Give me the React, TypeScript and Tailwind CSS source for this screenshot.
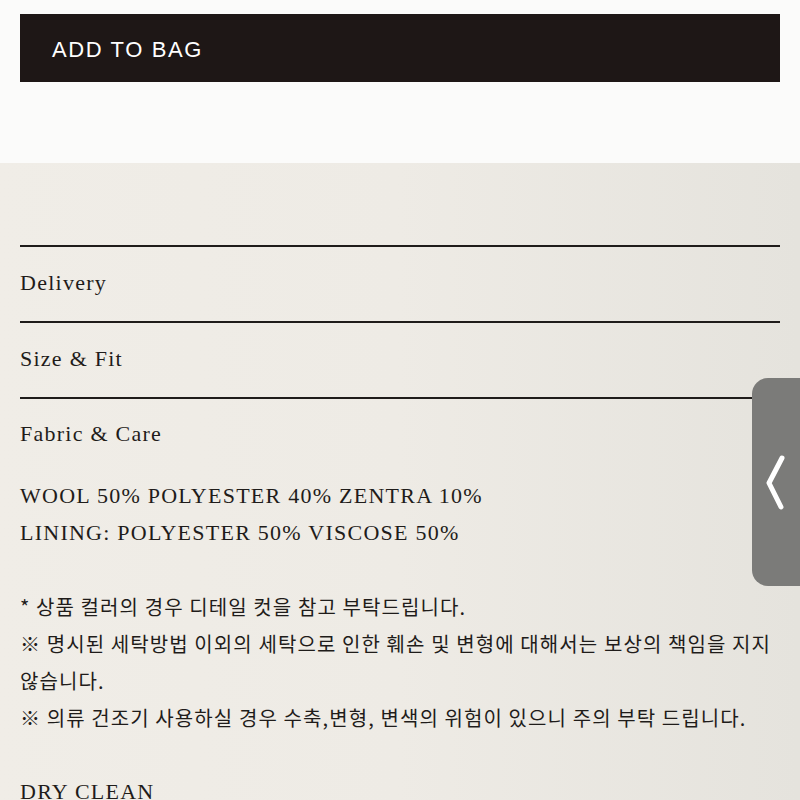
export default function App() {
  const serif = "font-['Liberation_Serif',serif] text-[22px] tracking-[1.25px]";
  const kr = "font-['Noto_Sans_CJK_KR','Noto_Sans',sans-serif] text-[20px] tracking-[1.1px] break-keep";
  return (
    <div className="relative w-[800px] h-[800px] overflow-hidden text-[#1f1c1a]">
      {/* top */}
      <div className="bg-[#fbfbfa] h-[163px] px-5 pt-[14px]">
        <button className="w-full h-[68px] bg-[#1e1716] text-left pl-8 pt-[2px] text-white font-['Liberation_Sans',sans-serif] text-[22px] tracking-[1.6px]">
          ADD TO BAG
        </button>
      </div>

      {/* details */}
      <div className="h-[637px] bg-gradient-to-r from-[#f0ede7] via-[#eeebe5] to-[#e5e3dd] px-5 pt-[82px]">
        {["Delivery", "Size & Fit"].map((t) => (
          <div key={t} className="border-t-2 border-[#1f1c1a] h-[76px] pb-[3px] flex items-center">
            <span className={serif}>{t}</span>
          </div>
        ))}
        <div className="border-t-2 border-[#1f1c1a]">
          <div className="h-[70px] pb-[2px] flex items-center">
            <span className={serif}>Fabric &amp; Care</span>
          </div>
          <div className="pt-2 leading-[37px]">
            <p className={serif}>WOOL 50% POLYESTER 40% ZENTRA 10%</p>
            <p className={serif}>LINING: POLYESTER 50% VISCOSE 50%</p>
            <p className="h-[37px]" />
            <p className={kr}>* 상품 컬러의 경우 디테일 컷을 참고 부탁드립니다.</p>
            <p className={kr}>※ 명시된 세탁방법 이외의 세탁으로 인한 훼손 및 변형에 대해서는 보상의 책임을 지지 않습니다.</p>
            <p className={kr}>※ 의류 건조기 사용하실 경우 수축,변형, 변색의 위험이 있으니 주의 부탁 드립니다.</p>
            <p className="h-[37px]" />
            <p className={serif}>DRY CLEAN</p>
          </div>
        </div>
      </div>

      {/* side tab */}
      <div className="absolute right-0 top-[378px] w-[48px] h-[208px] rounded-l-[16px] bg-[#7b7b79] flex items-center">
        <svg width="48" height="208" viewBox="0 0 48 208">
          <path d="M30 80 L17 105 L29 129" fill="none" stroke="#ffffff" strokeWidth="5" strokeLinecap="round" strokeLinejoin="round" />
        </svg>
      </div>
    </div>
  );
}
